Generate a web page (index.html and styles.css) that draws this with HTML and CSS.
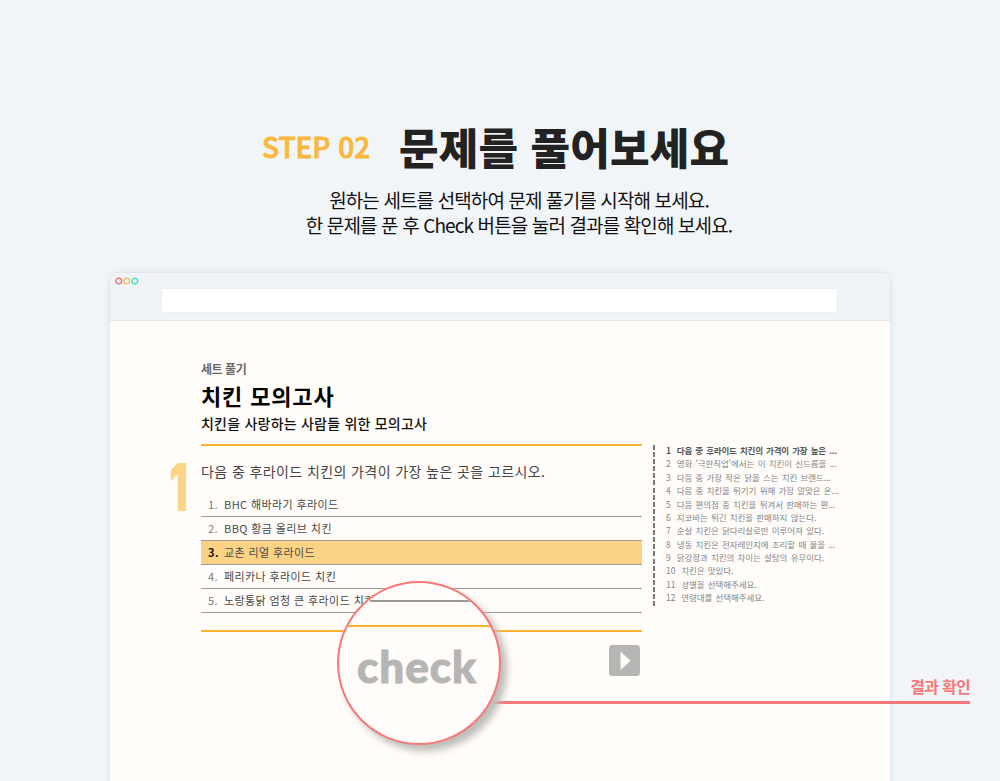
FILE: index.html
```html
<!DOCTYPE html>
<html lang="ko">
<head>
<meta charset="utf-8">
<title>STEP 02</title>
<link rel="stylesheet" href="styles.css">
</head>
<body>
<main class="page">
  <header class="intro">
    <div class="headline"><span class="step">STEP 02</span><h1 class="title">문제를 풀어보세요</h1></div>
    <p class="lead">원하는 세트를 선택하여 문제 풀기를 시작해 보세요.<br>한 문제를 푼 후 Check 버튼을 눌러 결과를 확인해 보세요.</p>
  </header>
  <section class="browser">
    <div class="bar">
      <svg class="dots" viewBox="0 0 25 8" fill="none" stroke-width="1.4"><circle cx="3.8" cy="4" r="2.9" stroke="#ee6b73"/><circle cx="11.8" cy="4" r="2.9" stroke="#edc04b"/><circle cx="19.8" cy="4" r="2.9" stroke="#49ddcb"/></svg>
      <div class="address"></div>
    </div>
    <div class="content">
      <div class="number"><span>1</span></div>
      <div class="quiz">
        <div class="kicker">세트 풀기</div>
        <h2 class="name">치킨 모의고사</h2>
        <div class="desc">치킨을 사랑하는 사람들 위한 모의고사</div>
        <div class="sheet">
          <div class="question">다음 중 후라이드 치킨의 가격이 가장 높은 곳을 고르시오.</div>
          <ol class="options">
            <li><b>1.</b><span>BHC 해바라기 후라이드</span></li>
            <li><b>2.</b><span>BBQ 황금 올리브 치킨</span></li>
            <li class="picked"><b>3.</b><span>교촌 리얼 후라이드</span></li>
            <li><b>4.</b><span>페리카나 후라이드 치킨</span></li>
            <li><b>5.</b><span>노랑통닭 엄청 큰 후라이드 치킨</span></li>
          </ol>
        </div>
        <svg class="next" viewBox="0 0 31 31"><rect width="31" height="31" rx="3.5" fill="#b5b5b3"/><path d="M11.5 6.5 21.5 15.7 11.5 25Z" fill="#fffcf9"/></svg>
      </div>
      <ul class="list">
        <li class="current"><b>1</b>다음 중 후라이드 치킨의 가격이 가장 높은 ...</li>
        <li><b>2</b>영화 '극한직업'에서는 이 치킨이 신드롬을 ...</li>
        <li><b>3</b>다음 중 가장 작은 닭을 스는 치킨 브랜드...</li>
        <li><b>4</b>다음 중 치킨을 튀기기 위해 가장 알맞은 온...</li>
        <li><b>5</b>다음 편의점 중 치킨을 튀겨서 판매하는 편...</li>
        <li><b>6</b>지코바는 튀긴 치킨을 판매하지 않는다.</li>
        <li><b>7</b>순살 치킨은 닭다리살로만 이루어져 있다.</li>
        <li><b>8</b>냉동 치킨은 전자레인지에 조리할 때 물을 ...</li>
        <li><b>9</b>닭강정과 치킨의 차이는 설탕의 유무이다.</li>
        <li><b>10</b>치킨은 맛있다.</li>
        <li><b>11</b>성별을 선택해주세요.</li>
        <li><b>12</b>연령대를 선택해주세요.</li>
      </ul>
    </div>
  </section>
  <div class="callout">결과 확인</div>
  <div class="lens"><div class="lens-top"></div><div class="lens-rule"></div><div class="check">check</div></div>
</main>
</body>
</html>
```
FILE: styles.css
```css
* { box-sizing: border-box; }
body { margin: 0; background: #f1f5f8; font-family: "Noto Sans CJK KR", sans-serif; }
h1, h2, p, ul, ol { margin: 0; padding: 0; }
ul, ol { list-style: none; }
.page { position: relative; width: 1000px; height: 781px; overflow: hidden; }
.intro { height: 272px; padding-top: 117px; }
.headline { display: flex; height: 60px; align-items: center; padding-left: 262px; }
.step { width: 137px; padding-bottom: 2px; color: #fbb63c; font-size: 28px; font-weight: 500; line-height: 58px; white-space: nowrap; -webkit-text-stroke: .8px #fbb63c; }
.title { padding-bottom: 2px; color: #222; font-size: 43px; font-weight: 900; line-height: 58px; letter-spacing: .2px; white-space: nowrap; }
.lead { margin-top: 10px; padding-left: 38px; text-align: center; color: #111; font-size: 19px; line-height: 25px; white-space: nowrap; letter-spacing: -0.88px; }
.browser { width: 782px; height: 520px; margin-left: 109px; border: 1px solid #dee7eb; border-radius: 9px 9px 0 0; background: #fffcf9; box-shadow: 0 0 7px #dce5ea; overflow: hidden; }
.bar { height: 48px; padding: 4px 52px 0 5px; background: #f0f4f7; border-bottom: 1px solid #e2eaed; }
.dots { display: block; width: 25px; height: 8px; margin-bottom: 3px; }
.address { width: 677px; height: 25px; margin-left: 46px; border: 1px solid #e9eef1; border-radius: 3px; background: #fff; }
.content { display: flex; color: #333; }
.number { width: 91px; padding: 126px 0 0 59px; color: #fcd485; font: 900 66px/80px Inter, sans-serif; }
.number span { display: block; width: 30px; transform: scaleX(.64); transform-origin: left; }
.quiz { width: 441px; padding: 39px 0 0 0; display: flex; flex-direction: column; }
.kicker { height: 19px; font-size: 12px; line-height: 18px; font-weight: 700; color: #6a6a6a; letter-spacing: -.45px; }
.name { height: 33px; font-size: 22px; line-height: 33px; color: #000; font-weight: 700; letter-spacing: .85px; }
.desc { height: 32px; font-size: 14px; line-height: 22px; font-weight: 500; color: #111; letter-spacing: .22px; }
.sheet { height: 188px; border-top: 2px solid #fab52c; border-bottom: 2px solid #fab52c; }
.question { height: 47px; line-height: 51px; font-size: 14px; font-weight: 400; letter-spacing: .4px; white-space: nowrap; color: #444; }
.options li { display: flex; height: 24px; padding-left: 7px; border-bottom: 1px solid #9b9b9b; font-size: 11px; line-height: 22px; white-space: nowrap; letter-spacing: .4px; color: #484848; }
.options b { width: 16px; font-size: 11px; font-weight: 400; color: #777; }
.options .picked { background: #fcd384; }
.options .picked b { font-weight: 700; color: #111; }
.next { width: 31px; height: 31px; margin: 13px 2px 0 0; align-self: flex-end; }
.list { height: 162px; margin: 124px 0 0 11px; padding-left: 13px; position: relative; font-size: 8.5px; line-height: 10px; color: #858585; white-space: nowrap; word-spacing: 1px; letter-spacing: -.07px; }
.list::before { content: ""; position: absolute; left: 0; top: 0; width: 2px; height: 162px; background: repeating-linear-gradient(#777 0 5px, transparent 5px 7.1px); }
.list li { height: 13.38px; }
.list b { font-weight: 400; margin-right: 6px; }
.list .current, .current b { font-weight: 700; color: #555; }
.list .current { letter-spacing: -.18px; }
.callout { position: absolute; left: 480px; top: 675px; width: 490px; height: 29px; border-bottom: 3px solid #f87879; color: #f87879; font-size: 16px; font-weight: 700; line-height: 22px; text-align: right; letter-spacing: -.7px; }
.lens { position: absolute; left: 337px; top: 581px; width: 164px; height: 164px; border: 2px solid #f87879; border-radius: 50%; overflow: hidden; background: #fffcf9; box-shadow: 6px 6px 7px #bdbdba; }
.lens-top { height: 19px; border-bottom: 2px solid #999; margin-left: 31px; }
.lens-rule { height: 25px; border-bottom: 2px solid #f1b02e; }
.check { padding-right: 4px; text-align: center; font: 900 44px/79px Lato, sans-serif; letter-spacing: 1px; color: #b5b5b3; -webkit-text-stroke: 1px #b5b5b3; }
```
